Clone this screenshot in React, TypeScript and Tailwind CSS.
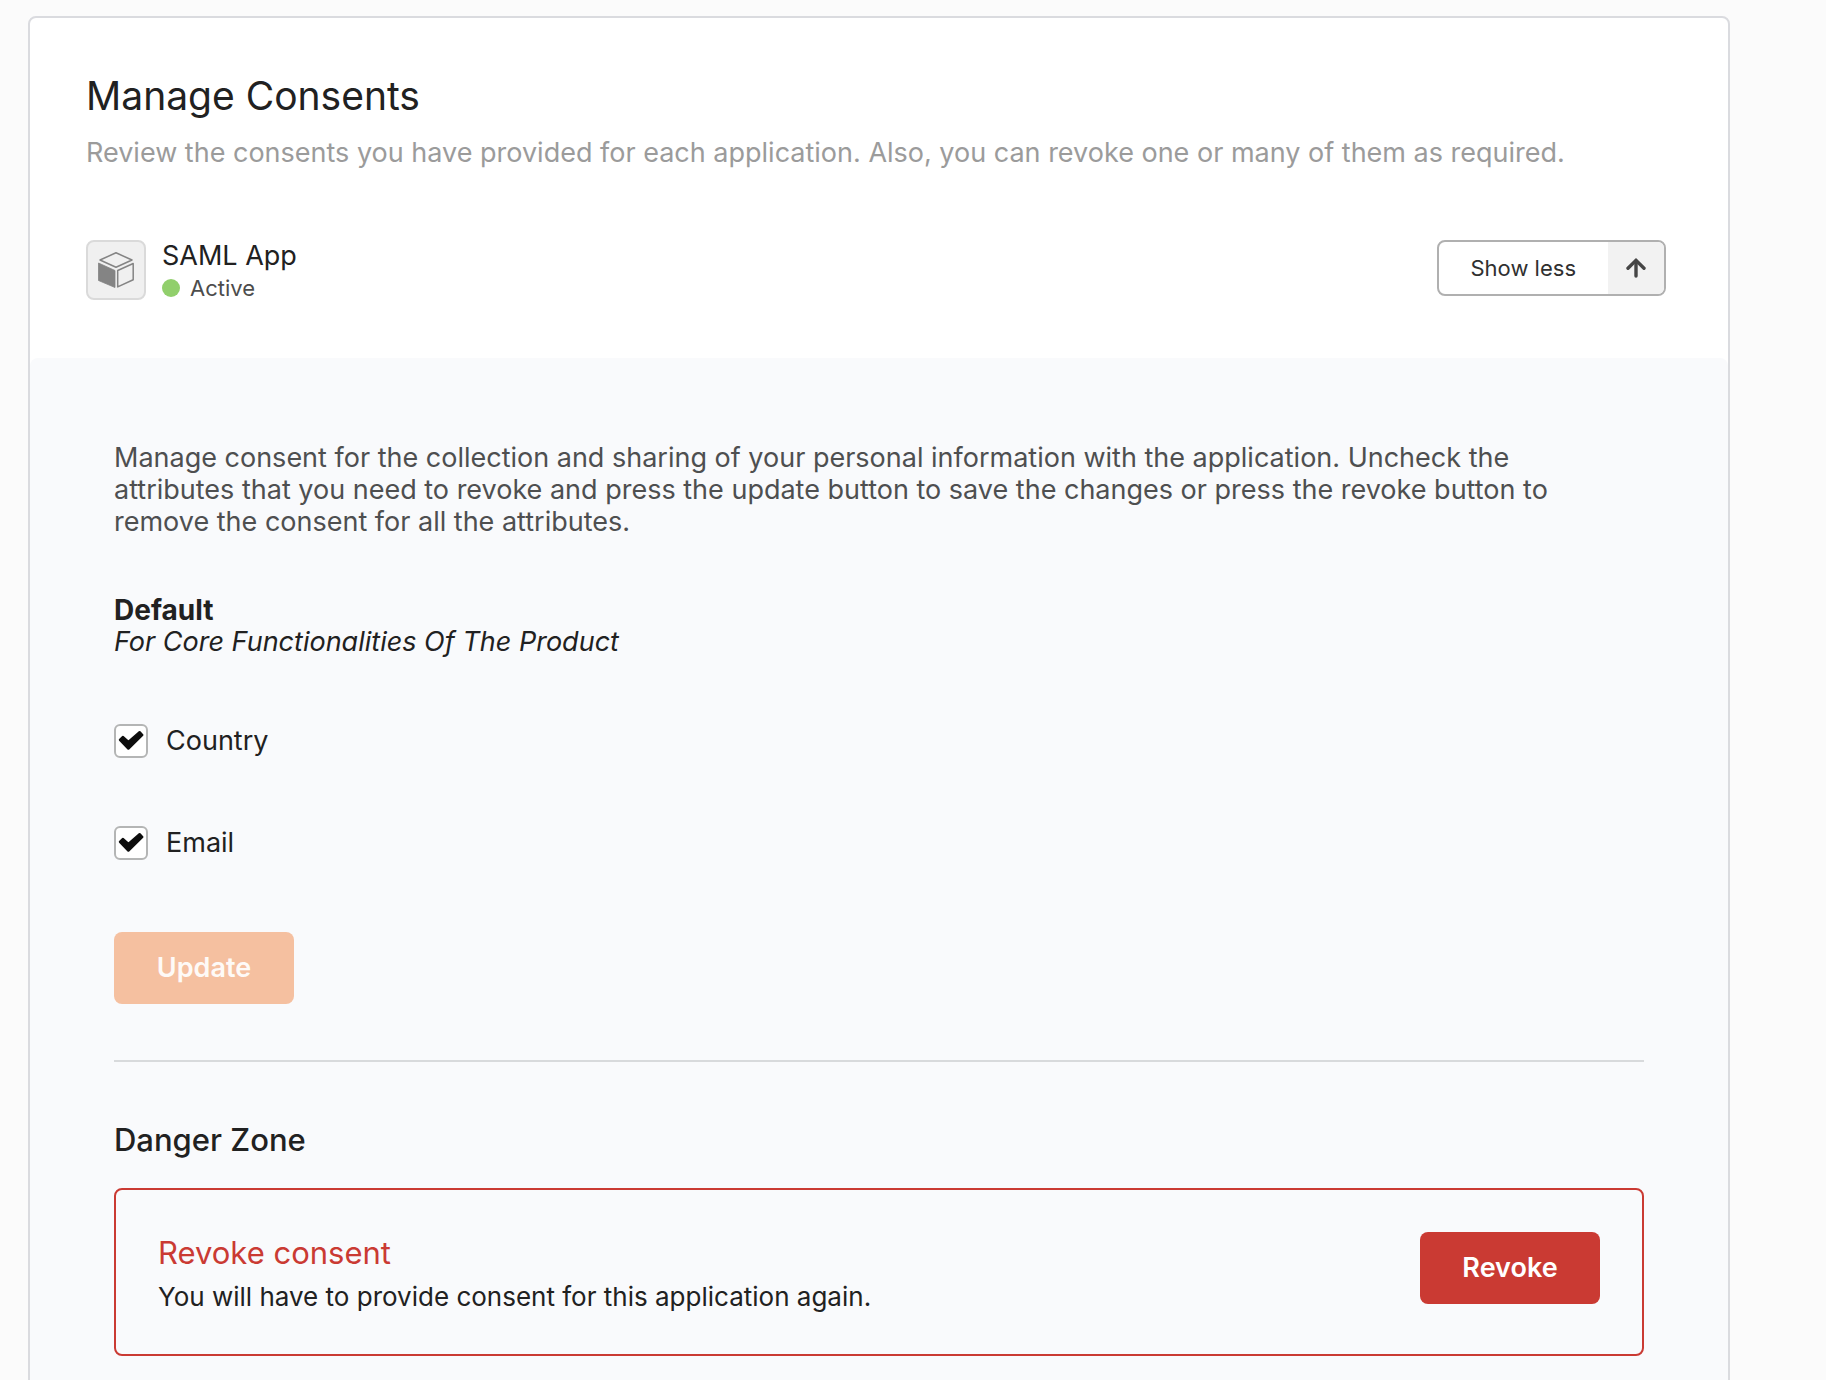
import { useState } from "react";

function CubeIcon() {
  return (
    <svg viewBox="0 0 36 36" className="size-9" fill="none" stroke="#848484" aria-hidden="true">
      <path d="M18 0.8 34 8 18 15.2 2 8Z" strokeWidth="1.5" strokeLinejoin="round" />
      <path d="M0.5 11 17 18.5V35.5L0.5 28.5Z" fill="#848484" strokeWidth="0.8" strokeLinejoin="round" />
      <path d="M19.7 18.5 35.2 11.5V27.7L19.7 34.9Z" strokeWidth="1.5" strokeLinejoin="round" />
    </svg>
  );
}

function ArrowUpIcon() {
  return (
    <svg viewBox="0 0 20 20" className="size-5" fill="none" stroke="#464646" strokeWidth="3.4" aria-hidden="true">
      <path d="M10 18V3" strokeLinecap="round" />
      <path d="M2 10.2 10 2.4 18 10.2" strokeLinecap="round" strokeLinejoin="miter" />
    </svg>
  );
}

function ConsentCheckbox({ id, label }: { id: string; label: string }) {
  const [checked, setChecked] = useState(true);
  return (
    <div className="flex items-center gap-[18px]">
      <span className="relative size-[34px] shrink-0">
        <input
          id={id}
          type="checkbox"
          checked={checked}
          onChange={(e) => setChecked(e.target.checked)}
          className="block size-[34px] appearance-none rounded-md border-2 border-[#b4b5b5] bg-white"
        />
        {checked && (
          <svg
            viewBox="0 0 34 34"
            className="pointer-events-none absolute inset-0 size-[34px]"
            fill="#0d0d0d"
            stroke="#0d0d0d"
            strokeWidth="2.4"
            strokeLinejoin="round"
            aria-hidden="true"
          >
            <path d="M6 15.8 8.8 13 14.4 17.9 25.6 8.2 28.3 11 14.4 24.6Z" />
          </svg>
        )}
      </span>
      <label htmlFor={id} className="text-[27px] leading-[34px]">
        {label}
      </label>
    </div>
  );
}

export default function App() {
  const [open, setOpen] = useState(true);
  return (
    <div className="min-h-screen bg-[#fbfbfb] pt-4 pr-24 pl-7 font-['Inter',sans-serif] text-[#212121]">
      <main className="rounded-lg border-2 border-[#dadbdf] bg-white">
        <header className="px-14 pt-[54px]">
          <h1 className="text-[39px] leading-12">Manage Consents</h1>
          <p className="mt-4 text-[27px] leading-[34px] text-[#9b9b9b]">
            Review the consents you have provided for each application. Also, you can revoke one or many of them as
            required.
          </p>
        </header>

        <section className="flex items-start justify-between pt-[70px] pr-[62px] pb-[54px] pl-14">
          <div className="flex gap-4">
            <span className="flex size-[60px] items-center justify-center rounded-lg border-2 border-[#dadada] bg-[#f0f0f0]">
              <CubeIcon />
            </span>
            <div>
              <h2 className="text-[27px] leading-8">SAML App</h2>
              <p className="flex items-center gap-[10px] text-[22px] leading-8 text-[#4c4c4c]">
                <span className="size-[18px] rounded-full bg-[#91cf6c]" />
                Active
              </p>
            </div>
          </div>
          <button
            type="button"
            aria-expanded={open}
            onClick={() => setOpen(!open)}
            className="flex h-14 items-stretch overflow-hidden rounded-lg border-2 border-[#b0b0b0] bg-white text-[22px] text-[#303030]"
          >
            <span className="flex items-center px-8">Show less</span>
            <span className="flex w-14 items-center justify-center bg-[#f2f2f2]">
              <ArrowUpIcon />
            </span>
          </button>
        </section>

        {open && (
          <section className="rounded-lg bg-[#f9fafc] px-[84px] pt-21 pb-12">
            <p className="pr-12 text-[27px] leading-8 text-[#4e4f50]">
              Manage consent for the collection and sharing of your personal information with the application. Uncheck
              the attributes that you need to revoke and press the update button to save the changes or press the revoke
              button to remove the consent for all the attributes.
            </p>

            <h3 className="mt-14 text-[28px] leading-8 font-bold">Default</h3>
            <p className="text-[27px] leading-8 italic">For Core Functionalities Of The Product</p>

            <div className="mt-[66px] flex flex-col gap-17">
              <ConsentCheckbox id="country" label="Country" />
              <ConsentCheckbox id="email" label="Email" />
            </div>

            <button
              type="button"
              className="mt-18 h-18 w-45 rounded-lg bg-[#f5c0a0] text-[27px] font-semibold text-[#fefaf7]"
            >
              Update
            </button>

            <hr className="mt-14 border-t-2 border-[#d8dadc]" />

            <h3 className="mt-[58px] text-[31px] leading-10 font-medium">Danger Zone</h3>
            <div className="mt-7 flex items-start justify-between rounded-lg border-2 border-[#ca3a33] px-[42px] pt-[42px] pb-[34px]">
              <div>
                <h4 className="text-[31px] leading-[42px] text-[#ca3a33]">Revoke consent</h4>
                <p className="text-[26px] leading-[46px]">
                  You will have to provide consent for this application again.
                </p>
              </div>
              <button type="button" className="h-18 w-45 rounded-lg bg-[#ca3a33] text-[27px] font-semibold text-white">
                Revoke
              </button>
            </div>
          </section>
        )}
      </main>
    </div>
  );
}
